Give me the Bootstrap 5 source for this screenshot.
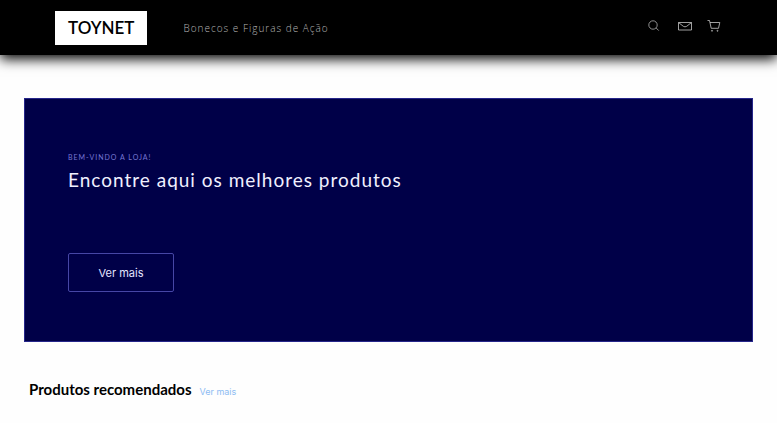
<!DOCTYPE html>
<html lang="pt-BR">
<head>
<meta charset="utf-8">
<meta name="viewport" content="width=device-width, initial-scale=1">
<title>Toynet</title>
<link href="https://cdn.jsdelivr.net/npm/bootstrap@5.3.0/dist/css/bootstrap.min.css" rel="stylesheet">
<style>
  body { font-family: Lato, "Open Sans", sans-serif; background: #fefefe; overflow-x: hidden; }
  .topbar { height: 55px; padding: 0 56px 0 55px; box-shadow: 0 4px 12px #000; }
  .logo { padding: 0 13px; height: 34px; font: 600 17px/34px Lato, sans-serif; }
  .topbar .tagline { margin-left: 36px; font: 300 10px/16px "Open Sans", sans-serif; letter-spacing: 1px; color: #b5b5b5; }
  .tools { gap: 15px; padding-bottom: 4px; color: #c8c8c8; }
  .tools svg { display: block; fill: none; stroke: currentColor; }
  .hero { margin: 43px 24px 0; padding: 54px 43px 49px; background: #000048; border: 1px solid #26268a; }
  .welcome { font-size: 7px; line-height: 8px; letter-spacing: 1px; color: #7777d4; }
  .hero h1 { margin: 5px 0 59px; font-size: 19px; line-height: 28px; font-weight: 400; letter-spacing: 1px; color: #f0f0ff; }
  .hero .btn { width: 106px; height: 39px; padding: 0; font: 400 11px/16px Inter, sans-serif; border: 1px solid #4646a6; border-radius: 2px; color: #e4e4ff; }
  .recommended { margin: 35px 29px 0; gap: 8px; }
  .recommended h2 { font-size: 15px; line-height: 24px; font-weight: 700; color: #000; }
  .recommended a { font: 400 9px/16px Inter, sans-serif; color: #8dbcf3; }
</style>
</head>
<body>
<header>
  <nav class="topbar d-flex align-items-center bg-black" aria-label="Principal">
    <a class="logo bg-white text-black text-decoration-none" href="#">TOYNET</a>
    <a class="tagline text-decoration-none" href="#">Bonecos e Figuras de Ação</a>
    <div class="tools d-flex align-items-center ms-auto">
      <button class="btn p-0 border-0 text-reset" type="button" aria-label="Buscar">
        <svg width="15" height="14" viewBox="0 0 15 14" stroke-width=".7"><circle cx="5" cy="6" r="4.2"/><path d="M8.2 9l2.5 2.6"/></svg>
      </button>
      <a class="text-reset" href="#" aria-label="Mensagens">
        <svg width="14" height="14" viewBox="0 0 14 14" stroke-width=".8"><path d="M.5 3.5h13v7.5H.5zM.5 3.5l4.8 3.8q1.7 1.1 3.4 0l4.8-3.8"/></svg>
      </a>
      <a class="text-reset" href="#" aria-label="Carrinho">
        <svg width="14" height="14" viewBox="0 0 14 14" stroke-width=".8"><path d="M.5 1.5h2l1.7 7.8h7.3l1.3-5.8H3"/><circle cx="5" cy="11.8" r=".5"/><circle cx="10.5" cy="11.8" r=".5"/></svg>
      </a>
    </div>
  </nav>
</header>
<main>
  <section class="hero">
    <p class="welcome mb-0 text-uppercase">Bem-vindo a loja!</p>
    <h1>Encontre aqui os melhores produtos</h1>
    <button class="btn" type="button">Ver mais</button>
  </section>
  <section class="recommended d-flex align-items-baseline">
    <h2 class="mb-0">Produtos recomendados</h2>
    <a class="text-decoration-none" href="#">Ver mais</a>
  </section>
</main>
<script src="https://cdn.jsdelivr.net/npm/bootstrap@5.3.0/dist/js/bootstrap.bundle.min.js"></script>
</body>
</html>
